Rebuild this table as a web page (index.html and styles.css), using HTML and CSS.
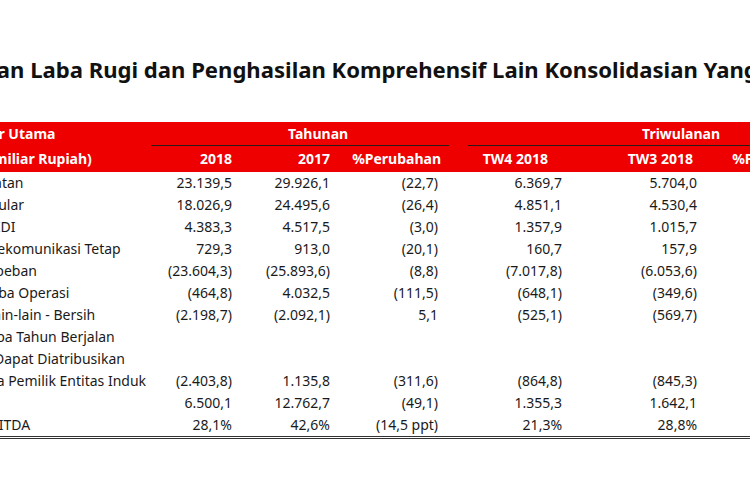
FILE: index.html
```html
<!DOCTYPE html>
<html lang="id">
<head>
<meta charset="utf-8">
<title>Laporan Laba Rugi</title>
<link rel="stylesheet" href="styles.css">
</head>
<body>
<div class="page">
  <h1 class="title">Laporan Laba Rugi dan Penghasilan Komprehensif Lain Konsolidasian Yang Disederhanakan</h1>
  <table class="fin">
    <colgroup>
      <col class="c-label"><col class="c-y1"><col class="c-y2"><col class="c-yp"><col class="c-gap"><col class="c-q1"><col class="c-q2"><col class="c-qp"><col class="c-extra">
    </colgroup>
    <thead>
      <tr class="h1row">
        <th class="hl">Indikator Utama</th>
        <th class="grp grp-y" colspan="3">Tahunan</th>
        <th class="gap"></th>
        <th class="grp grp-q" colspan="4">Triwulanan</th>
      </tr>
      <tr class="h2row">
        <th class="hl hl2">(dalam miliar Rupiah)</th>
        <th class="hn">2018</th>
        <th class="hn">2017</th>
        <th class="hn">%Perubahan</th>
        <th class="gap"></th>
        <th class="hn hq1">TW4 2018</th>
        <th class="hn hq2">TW3 2018</th>
        <th class="hn hqp">%Perubahan</th>
        <th></th>
      </tr>
    </thead>
    <tbody>
      <tr><td class="lab i-pend">Pendapatan</td><td>23.139,5</td><td>29.926,1</td><td class="pc">(22,7)</td><td class="gap"></td><td>6.369,7</td><td>5.704,0</td><td>11,7</td><td></td></tr>
      <tr><td class="lab i-sel">Selular</td><td>18.026,9</td><td>24.495,6</td><td class="pc">(26,4)</td><td class="gap"></td><td>4.851,1</td><td>4.530,4</td><td>7,1</td><td></td></tr>
      <tr><td class="lab i-midi">MIDI</td><td>4.383,3</td><td>4.517,5</td><td class="pc">(3,0)</td><td class="gap"></td><td>1.357,9</td><td>1.015,7</td><td>33,7</td><td></td></tr>
      <tr><td class="lab i-tel">Telekomunikasi Tetap</td><td>729,3</td><td>913,0</td><td class="pc">(20,1)</td><td class="gap"></td><td>160,7</td><td>157,9</td><td>1,8</td><td></td></tr>
      <tr><td class="lab i-beban">Jumlah beban</td><td>(23.604,3)</td><td>(25.893,6)</td><td class="pc">(8,8)</td><td class="gap"></td><td>(7.017,8)</td><td>(6.053,6)</td><td>15,9</td><td></td></tr>
      <tr><td class="lab i-laba">Laba Operasi</td><td>(464,8)</td><td>4.032,5</td><td class="pc">(111,5)</td><td class="gap"></td><td>(648,1)</td><td>(349,6)</td><td>(85,4)</td><td></td></tr>
      <tr><td class="lab i-lain">Lain-lain - Bersih</td><td>(2.198,7)</td><td>(2.092,1)</td><td class="pc">5,1</td><td class="gap"></td><td>(525,1)</td><td>(569,7)</td><td>(7,8)</td><td></td></tr>
      <tr><td class="lab i-laba2">Laba Tahun Berjalan</td><td></td><td></td><td class="pc"></td><td class="gap"></td><td></td><td></td><td></td><td></td></tr>
      <tr><td class="lab i-yang">Yang Dapat Diatribusikan</td><td></td><td></td><td class="pc"></td><td class="gap"></td><td></td><td></td><td></td><td></td></tr>
      <tr><td class="lab i-kep">Kepada Pemilik Entitas Induk</td><td>(2.403,8)</td><td>1.135,8</td><td class="pc">(311,6)</td><td class="gap"></td><td>(864,8)</td><td>(845,3)</td><td>(2,3)</td><td></td></tr>
      <tr><td class="lab i-ebitda">EBITDA</td><td>6.500,1</td><td>12.762,7</td><td class="pc">(49,1)</td><td class="gap"></td><td>1.355,3</td><td>1.642,1</td><td>(17,5)</td><td></td></tr>
      <tr class="last"><td class="lab i-marg">Marjin EBITDA</td><td>28,1%</td><td>42,6%</td><td class="pc">(14,5 ppt)</td><td class="gap"></td><td>21,3%</td><td>28,8%</td><td>(7,5 ppt)</td><td></td></tr>
    </tbody>
  </table>
</div>
</body>
</html>
```

FILE: styles.css
```css
html, body {
  margin: 0;
  padding: 0;
  overflow: hidden;
  background: #ffffff;
}

.page {
  width: 750px;
  height: 500px;
  overflow: hidden;
  font-family: "Noto Sans", "Open Sans", sans-serif;
  color: #1a1a1a;
}

.title {
  margin: 0 0 0 -66px;
  padding-top: 54px;
  font-size: 22.1px;
  line-height: 30px;
  font-weight: 700;
  color: #111;
  white-space: nowrap;
}

.fin {
  margin: 38px 0 0 -62px;
  border-collapse: separate;
  border-spacing: 0;
  table-layout: fixed;
  width: 962px;
  font-size: 14px;
  white-space: nowrap;
}

.c-label { width: 213px; }
.c-y1 { width: 89px; }
.c-y2 { width: 98px; }
.c-yp { width: 111px; }
.c-gap { width: 19px; }
.c-q1 { width: 102px; }
.c-q2 { width: 135px; }
.c-qp { width: 125px; }
.c-extra { width: 70px; }

.fin thead th {
  background: #ee0000;
  color: #ffffff;
  font-weight: 700;
  padding: 0;
}

.h1row th {
  height: 23px;
  line-height: 23px;
  border-bottom: 1px solid transparent;
}

.h1row th.grp {
  border-bottom: 1px solid #2a1a1a;
  text-align: left;
}

.grp-y { padding-left: 137px !important; }
.grp-q { padding-left: 174px !important; }

.h2row th {
  height: 26px;
  line-height: 26px;
}

.fin th.hl {
  text-align: left;
  padding-left: 1px;
}

.fin th.hl2 { padding-left: 4px; }

.fin th.hn {
  text-align: right;
  padding-right: 8px;
}

.fin th.hq1 { padding-right: 22px; }
.fin th.hq2 { padding-right: 12px; }
.fin th.hqp { padding-right: 9px; }

.fin tbody td {
  height: 22px;
  line-height: 22px;
  padding: 0 8px 0 0;
  text-align: right;
}

.fin tbody td.pc { padding-right: 11px; }
.fin tbody td.gap { padding: 0; }

.fin tbody td.lab {
  text-align: left;
  padding-right: 0;
}

.i-pend { padding-left: 6px !important; }
.i-sel { padding-left: 41px !important; }
.i-midi { padding-left: 45px !important; }
.i-tel { padding-left: 41px !important; }
.i-beban { padding-left: 8px !important; }
.i-laba { padding-left: 45px !important; }
.i-lain { padding-left: 48px !important; }
.i-laba2 { padding-left: 43px !important; }
.i-yang { padding-left: 20px !important; }
.i-kep { padding-left: 17px !important; }
.i-ebitda { padding-left: 6px !important; }
.i-marg { padding-left: 0 !important; text-indent: -2px; }

.fin tbody tr.last td {
  border-bottom: 3px double #333333;
}
```
